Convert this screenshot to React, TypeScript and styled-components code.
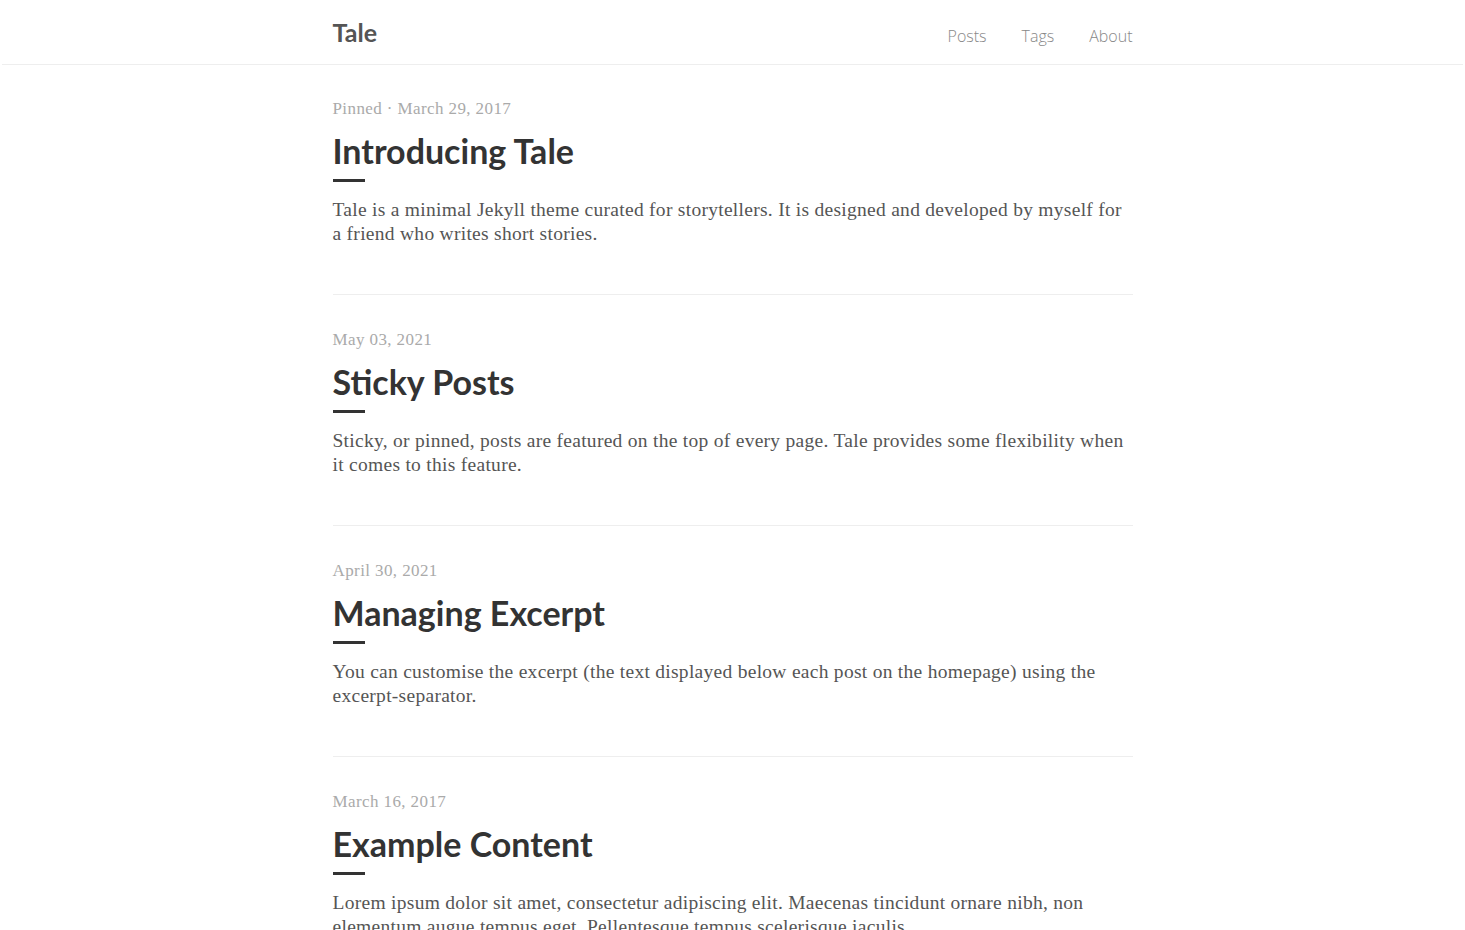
import React from 'react'
import styled, { createGlobalStyle } from 'styled-components'

interface Post {
    meta: string
    title: string
    excerpt: string
}

const posts: Post[] = [
    {
        meta: 'Pinned · March 29, 2017',
        title: 'Introducing Tale',
        excerpt: 'Tale is a minimal Jekyll theme curated for storytellers. It is designed and developed by myself for a friend who writes short stories.'
    },
    {
        meta: 'May 03, 2021',
        title: 'Sticky Posts',
        excerpt: 'Sticky, or pinned, posts are featured on the top of every page. Tale provides some flexibility when it comes to this feature.'
    },
    {
        meta: 'April 30, 2021',
        title: 'Managing Excerpt',
        excerpt: 'You can customise the excerpt (the text displayed below each post on the homepage) using the excerpt-separator.'
    },
    {
        meta: 'March 16, 2017',
        title: 'Example Content',
        excerpt: 'Lorem ipsum dolor sit amet, consectetur adipiscing elit. Maecenas tincidunt ornare nibh, non elementum augue tempus eget. Pellentesque tempus scelerisque iaculis.'
    }
]

const App: React.FC = () => {
    return(
        <>
            <GlobalStyle />
            <Nav>
                <NavInner>
                    <Brand href="#">Tale</Brand>
                    <Links>
                        <NavLink href="#">Posts</NavLink>
                        <NavLink href="#">Tags</NavLink>
                        <NavLink href="#">About</NavLink>
                    </Links>
                </NavInner>
            </Nav>
            <Main>
                {
                    posts.map((post, index) => {
                        return(
                            <PostItem key={index}>
                                <Meta>{post.meta}</Meta>
                                <Title>{post.title}</Title>
                                <Bar />
                                <Excerpt>{post.excerpt}</Excerpt>
                            </PostItem>
                        )
                    })
                }
            </Main>
        </>
    )
}

const GlobalStyle = createGlobalStyle`
    body {
        margin: 0;
        background: #fff;
        font-family: "Liberation Serif", serif;
    }
`
const Nav = styled.nav`
    height: 64px;
    margin: 0 2px;
    border-bottom: 1px solid #eee;
`
const NavInner = styled.div`
    width: 800px;
    height: 100%;
    margin: 0 auto;
    display: flex;
    align-items: center;
    justify-content: space-between;
`
const Brand = styled.a`
    font-family: Lato, sans-serif;
    font-weight: 700;
    font-size: 25px;
    color: #555;
    text-decoration: none;
`
const Links = styled.div`
    display: flex;
    gap: 35px;
    margin-top: 8px;
`
const NavLink = styled.a`
    font-family: "Open Sans", sans-serif;
    font-weight: 300;
    font-size: 16px;
    color: #888;
    text-decoration: none;
`
const Main = styled.main`
    width: 800px;
    margin: 0 auto;
    padding-top: 34px;
`
const PostItem = styled.article`
    padding-bottom: 48px;
    margin-bottom: 35px;
    border-bottom: 1px solid #eee;
`
const Meta = styled.div`
    font-size: 17px;
    letter-spacing: 0.4px;
    color: #aaa;
    line-height: 20px;
`
const Title = styled.h2`
    font-family: Lato, sans-serif;
    font-weight: 700;
    font-size: 34px;
    color: #333;
    margin: 10px 0 0;
    line-height: 44px;
`
const Bar = styled.div`
    width: 32px;
    height: 3px;
    background: #333;
    margin-top: 6px;
`
const Excerpt = styled.p`
    font-size: 19.5px;
    letter-spacing: 0.28px;
    line-height: 24px;
    color: #555;
    margin: 16px 0 0;
`
export default App
